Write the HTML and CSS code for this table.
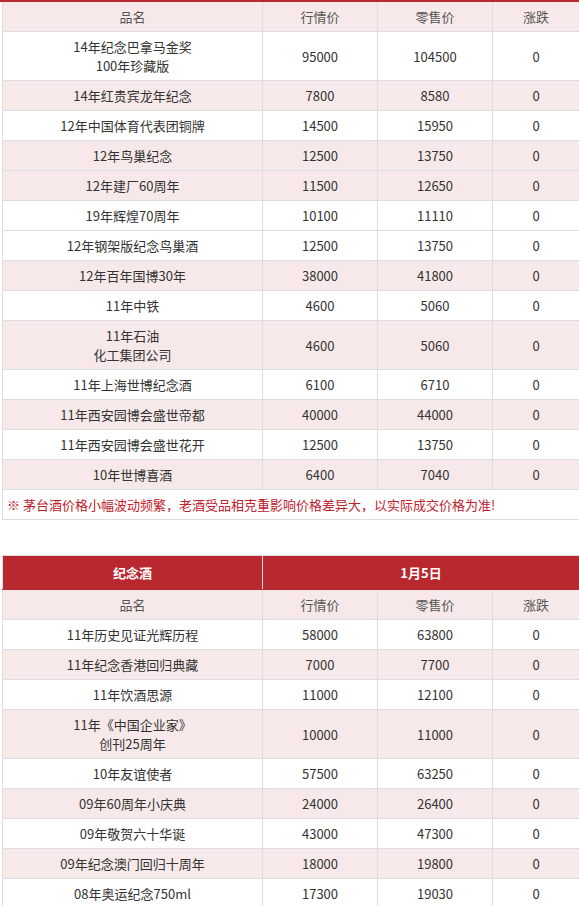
FILE: index.html
```html
<!DOCTYPE html>
<html lang="zh-CN">
<head>
<meta charset="utf-8">
<title>纪念酒价格</title>
<link rel="stylesheet" href="styles.css">
</head>
<body>
<div class="page">
  <div class="top-bar"></div>
  <table class="price first">
    <colgroup><col class="c1"><col class="c2"><col class="c3"><col class="c4"></colgroup>
    <tr class="pink head"><td>品名</td><td>行情价</td><td>零售价</td><td>涨跌</td></tr>
    <tr><td>14年纪念巴拿马金奖<br>100年珍藏版</td><td>95000</td><td>104500</td><td>0</td></tr>
    <tr class="pink"><td>14年红贵宾龙年纪念</td><td>7800</td><td>8580</td><td>0</td></tr>
    <tr><td>12年中国体育代表团铜牌</td><td>14500</td><td>15950</td><td>0</td></tr>
    <tr class="pink"><td>12年鸟巢纪念</td><td>12500</td><td>13750</td><td>0</td></tr>
    <tr class="pink"><td>12年建厂60周年</td><td>11500</td><td>12650</td><td>0</td></tr>
    <tr><td>19年辉煌70周年</td><td>10100</td><td>11110</td><td>0</td></tr>
    <tr><td>12年钢架版纪念鸟巢酒</td><td>12500</td><td>13750</td><td>0</td></tr>
    <tr class="pink"><td>12年百年国博30年</td><td>38000</td><td>41800</td><td>0</td></tr>
    <tr><td>11年中铁</td><td>4600</td><td>5060</td><td>0</td></tr>
    <tr class="pink"><td>11年石油<br>化工集团公司</td><td>4600</td><td>5060</td><td>0</td></tr>
    <tr><td>11年上海世博纪念酒</td><td>6100</td><td>6710</td><td>0</td></tr>
    <tr class="pink"><td>11年西安园博会盛世帝都</td><td>40000</td><td>44000</td><td>0</td></tr>
    <tr><td>11年西安园博会盛世花开</td><td>12500</td><td>13750</td><td>0</td></tr>
    <tr class="pink"><td>10年世博喜酒</td><td>6400</td><td>7040</td><td>0</td></tr>
    <tr><td class="note" colspan="4">※ 茅台酒价格小幅波动频繁，老酒受品相克重影响价格差异大，以实际成交价格为准!</td></tr>
  </table>

  <table class="price second">
    <colgroup><col class="c1"><col class="c2"><col class="c3"><col class="c4"></colgroup>
    <tr class="red"><td>纪念酒</td><td colspan="3">1月5日</td></tr>
    <tr class="pink head"><td>品名</td><td>行情价</td><td>零售价</td><td>涨跌</td></tr>
    <tr><td>11年历史见证光辉历程</td><td>58000</td><td>63800</td><td>0</td></tr>
    <tr class="pink"><td>11年纪念香港回归典藏</td><td>7000</td><td>7700</td><td>0</td></tr>
    <tr><td>11年饮酒思源</td><td>11000</td><td>12100</td><td>0</td></tr>
    <tr class="pink"><td>11年《中国企业家》<br>创刊25周年</td><td>10000</td><td>11000</td><td>0</td></tr>
    <tr><td>10年友谊使者</td><td>57500</td><td>63250</td><td>0</td></tr>
    <tr class="pink"><td>09年60周年小庆典</td><td>24000</td><td>26400</td><td>0</td></tr>
    <tr><td>09年敬贺六十华诞</td><td>43000</td><td>47300</td><td>0</td></tr>
    <tr class="pink"><td>09年纪念澳门回归十周年</td><td>18000</td><td>19800</td><td>0</td></tr>
    <tr><td>08年奥运纪念750ml</td><td>17300</td><td>19030</td><td>0</td></tr>
  </table>
</div>
</body>
</html>
```

FILE: styles.css
```css
html, body {
  margin: 0;
  padding: 0;
  background: #ffffff;
}

.page {
  width: 579px;
  font-family: "Noto Sans CJK SC", "Noto Sans", sans-serif;
  font-size: 13px;
  color: #333333;
}

.top-bar {
  height: 2px;
  background: #b8282e;
}

.price {
  margin-left: 2px;
  width: 577px;
  border-collapse: collapse;
  table-layout: fixed;
}

.price col.c1 { width: 260px; }
.price col.c2 { width: 115px; }
.price col.c3 { width: 115px; }
.price col.c4 { width: 87px; }

.price td {
  border: 1px solid #dddddd;
  padding: 5px 0;
  line-height: 19px;
  text-align: center;
  vertical-align: middle;
  background: #ffffff;
}

.first tr.head td {
  border-top: none;
}

.price tr.pink td {
  background: #f7e9e9;
}

.price tr.head td {
  color: #555555;
}

.price td.note {
  text-align: left;
  padding-left: 4px;
  color: #c0202c;
}

.second {
  margin-top: 35px;
}

.price tr.red td {
  background: #b8282e;
  color: #ffffff;
  font-weight: bold;
  font-size: 13px;
  padding: 7px 0;
  border-color: #dddddd;
  border-bottom-color: #b8282e;
}

.price tr.red td + td {
  border-left-color: #ffffff;
}
```
